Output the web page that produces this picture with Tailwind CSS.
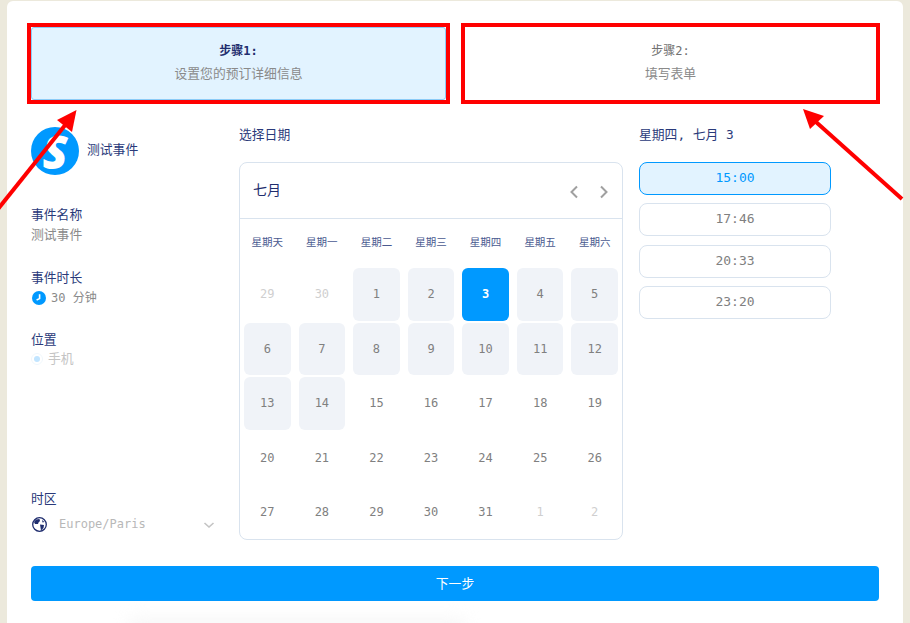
<!DOCTYPE html>
<html lang="zh">
	<head>
		<meta charset="utf-8" />
		<title>测试事件</title>
		<script src="https://cdn.jsdelivr.net/npm/@tailwindcss/browser@4"></script>
	</head>
	<body class="h-[623px] w-[910px] overflow-hidden bg-[#ece9dc] font-['DejaVu_Sans_Mono','Noto_Sans_CJK_SC',monospace] text-[12.800px] text-[#2a3a7a]">
		<div class="relative ml-[7px] mt-px h-[640px] w-[896px] rounded-md bg-white px-5 pt-[22px]">
			<!-- steps, red frames are part of the screenshot -->
			<div class="grid grid-cols-[423px_419px] gap-x-[11px]">
				<div class="h-[81px] border-4 border-[#ff0000]">
					<div class="flex h-full flex-col items-center justify-center gap-[4px] rounded-[3px] border border-[#8ccbf7] bg-[#e2f3ff] pb-[2px]">
						<div class="text-xs leading-[18px] font-bold text-[#1f2d6e]">步骤1:</div>
						<div class="leading-[20px] text-[#8a8a8a]">设置您的预订详细信息</div>
					</div>
				</div>
				<div class="flex h-[81px] flex-col items-center justify-center gap-[4px] border-4 border-[#ff0000] pb-[2px]">
					<div class="text-xs leading-[18px] text-[#707070]">步骤2:</div>
					<div class="leading-[20px] text-[#8a8a8a]">填写表单</div>
				</div>
			</div>

			<div class="mt-[19px] ml-1 flex h-[423px]">
				<!-- event info -->
				<div class="flex w-[208px] flex-col pt-[4px]">
					<div class="flex items-start gap-2 pr-[24px]">
						<div class="flex size-12 shrink-0 items-center justify-center rounded-full bg-[#0099ff] font-['Open_Sans',sans-serif] text-[46px] leading-none font-extrabold text-white italic">S</div>
						<div class="mt-[13px] leading-[20px]">测试事件</div>
					</div>
					<div class="mt-[30px] leading-[20px]">事件名称</div>
					<div class="text-[#8a8a8a] leading-[20px]">测试事件</div>
					<div class="mt-[23px] leading-[20px]">事件时长</div>
					<div class="mt-[2px] flex items-center gap-[5px] leading-[20px] text-[#8a8a8a]">
						<svg class="ml-px size-[14px]" viewBox="0 0 14 14"><circle cx="7" cy="7" r="7" fill="#0099ff" /><path d="M7.600 3.200V7.600L4.600 9" fill="none" stroke="#fff" stroke-width="1.600" /></svg>
						<span class="text-xs">30 分钟</span>
					</div>
					<div class="mt-[24px] leading-[20px]">位置</div>
					<div class="-mt-px flex items-center gap-[5px] leading-[20px] text-[#c4c4c4]">
						<svg class="size-3" viewBox="0 0 12 12"><circle cx="6" cy="6" r="5.500" fill="none" stroke="#f0f7fc" /><circle cx="6" cy="6" r="3" fill="#c2e5ff" /></svg>
						<span>手机</span>
					</div>
					<div class="mt-auto leading-[20px]">时区</div>
					<div class="mt-[7px] mb-[14px] flex items-center pr-[24px]">
						<svg class="ml-px size-[15px]" viewBox="0 0 15 15"><circle cx="7.500" cy="7.500" r="6.800" fill="#fff" stroke="#1f2d6e" stroke-width="1.300" /><path d="M4 2.500 7.500 2 8 4 6.500 5.500 6 7 3 7 2 5ZM8 7.500 12 8 11.500 11 9 13.500 8.500 10.500ZM10 3 12.500 5 10.500 5.500Z" fill="#1f2d6e" /></svg>
						<span class="ml-3 text-xs text-[#b8b8b8]">Europe/Paris</span>
						<svg class="mt-[2px] ml-auto size-[12px]" viewBox="0 0 12 12"><path d="M1.500 4 6 8l4.500-4" fill="none" stroke="#c4c4c4" stroke-width="1.600" /></svg>
					</div>
				</div>

				<!-- calendar -->
				<div class="w-[384px] pt-[2px]">
					<div class="leading-[20px]">选择日期</div>
					<div class="mt-[17px] h-[378px] rounded-lg border border-[#d9e3ee]">
						<div class="flex h-[56px] items-center justify-between border-b border-[#d9e3ee] pl-[13px] pr-[10px]">
							<span class="-mt-[2px] text-sm text-[#1f2d6e]">七月</span>
							<div class="mt-[3px] flex gap-[14px]">
								<svg class="size-4" viewBox="0 0 16 16"><path d="M11 2.500 5.500 8l5.500 5.500" fill="none" stroke="#a0a0a0" stroke-width="2" /></svg>
								<svg class="size-4" viewBox="0 0 16 16"><path d="M5 2.500 10.500 8 5 13.500" fill="none" stroke="#a0a0a0" stroke-width="2" /></svg>
							</div>
						</div>
						<div class="grid grid-cols-7 gap-x-2 px-1 pt-[15px] text-center text-[10.500px] leading-[16px] text-[#4a5a90]">
							<span>星期天</span><span>星期一</span><span>星期二</span><span>星期三</span><span>星期四</span><span>星期五</span><span>星期六</span>
						</div>
						<div class="mt-[18px] grid grid-cols-7 auto-rows-[52.500px] gap-x-2 gap-y-[2px] px-1 text-center text-xs leading-[52.500px] text-[#808080]">
							<span class="text-[#cfcfcf]">29</span>
							<span class="text-[#cfcfcf]">30</span>
							<span class="rounded-md bg-[#f0f3f8]">1</span>
							<span class="rounded-md bg-[#f0f3f8]">2</span>
							<span class="rounded-md bg-[#0099ff] font-bold text-white">3</span>
							<span class="rounded-md bg-[#f0f3f8]">4</span>
							<span class="rounded-md bg-[#f0f3f8]">5</span>
							<span class="rounded-md bg-[#f0f3f8]">6</span>
							<span class="rounded-md bg-[#f0f3f8]">7</span>
							<span class="rounded-md bg-[#f0f3f8]">8</span>
							<span class="rounded-md bg-[#f0f3f8]">9</span>
							<span class="rounded-md bg-[#f0f3f8]">10</span>
							<span class="rounded-md bg-[#f0f3f8]">11</span>
							<span class="rounded-md bg-[#f0f3f8]">12</span>
							<span class="rounded-md bg-[#f0f3f8]">13</span>
							<span class="rounded-md bg-[#f0f3f8]">14</span>
							<span>15</span><span>16</span><span>17</span><span>18</span><span>19</span>
							<span>20</span><span>21</span><span>22</span><span>23</span><span>24</span><span>25</span><span>26</span>
							<span>27</span><span>28</span><span>29</span><span>30</span><span>31</span>
							<span class="text-[#cfcfcf]">1</span>
							<span class="text-[#cfcfcf]">2</span>
						</div>
					</div>
				</div>

				<!-- times -->
				<div class="ml-4 w-[192px] pt-[2px]">
					<div class="leading-[20px]">星期四, 七月 3</div>
					<div class="mt-[17px] flex flex-col gap-[8.300px] text-[13px] leading-[30px] text-center text-[#808080]">
						<div class="h-[33px] rounded-lg border border-[#0099ff] bg-[#e2f3ff] text-[#0099ff]">15:00</div>
						<div class="h-[33px] rounded-lg border border-[#d9e3ee]">17:46</div>
						<div class="h-[33px] rounded-lg border border-[#d9e3ee]">20:33</div>
						<div class="h-[33px] rounded-lg border border-[#d9e3ee]">23:20</div>
					</div>
				</div>
			</div>

			<button class="mt-[20px] ml-1 block h-[35px] w-[848px] rounded-[4px] bg-[#0099ff] text-white">下一步</button>

			<!-- faint shadow at the bottom edge -->
			<div class="absolute top-[617px] left-[120px] h-[20px] w-[340px] rounded-full bg-[#f7f7f7] blur-sm"></div>

			<!-- annotation arrows -->
			<svg class="absolute top-[-1px] left-[-7px] h-[623px] w-[910px]" viewBox="0 0 910 623">
				<path d="M-2 209 66 124" stroke="#ff0000" stroke-width="4" />
				<path d="M76.500 110 57 120 72 132Z" fill="#ff0000" />
				<path d="M902 199 816 122" stroke="#ff0000" stroke-width="4" />
				<path d="M803 109 824 116 810 129Z" fill="#ff0000" />
			</svg>
		</div>
	</body>
</html>
